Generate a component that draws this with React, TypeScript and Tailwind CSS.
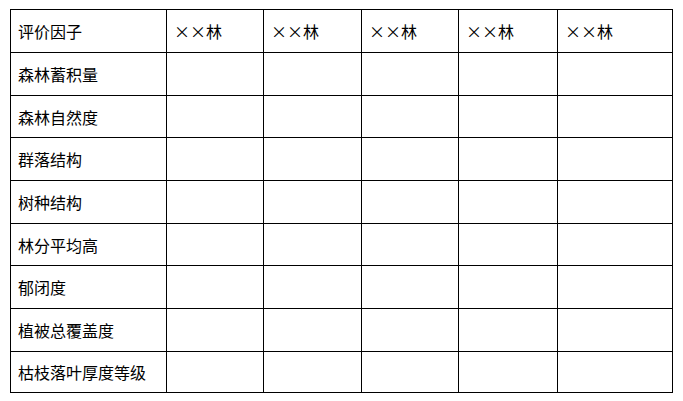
const factors = [
  '森林蓄积量',
  '森林自然度',
  '群落结构',
  '树种结构',
  '林分平均高',
  '郁闭度',
  '植被总覆盖度',
  '枯枝落叶厚度等级',
];

// line positions in the reference: 9, 52, 95, 137, 180, 223, 265, 308, 351, 392
const rowHeights = ['h-[42px]', 'h-[42px]', 'h-[41px]', 'h-[42px]', 'h-[42px]', 'h-[41px]', 'h-[42px]', 'h-[42px]', 'h-[40px]'];

function Forest() {
  return (
    <span className="flex items-center">
      <span className="inline-block w-[16px] text-center">×</span>
      <span className="inline-block w-[16px] text-center">×</span>
      <span>林</span>
    </span>
  );
}

export default function App() {
  return (
    <div
      className="w-[683px] h-[401px] bg-white pt-[9px] pl-[10px] text-[16px] leading-none text-black"
      style={{ fontFamily: '"Noto Sans CJK SC", "Liberation Sans", sans-serif' }}
    >
      <div className="grid w-[663px] grid-cols-[155px_96px_97px_96px_98px_114px] gap-px bg-black p-px">
        {/* Header */}
        <div className={`${rowHeights[0]} bg-white flex items-center pl-[7px]`}>评价因子</div>
        {[0, 1, 2, 3, 4].map((i) => (
          <div key={i} className={`${rowHeights[0]} bg-white flex items-center pl-[7px]`}>
            <Forest />
          </div>
        ))}

        {/* Body */}
        {factors.map((name, r) => (
          <div key={name} className="contents">
            <div className={`${rowHeights[r + 1]} bg-white flex items-center pl-[7px]`}>{name}</div>
            {[0, 1, 2, 3, 4].map((c) => (
              <div key={c} className={`${rowHeights[r + 1]} bg-white`} />
            ))}
          </div>
        ))}
      </div>
    </div>
  );
}
